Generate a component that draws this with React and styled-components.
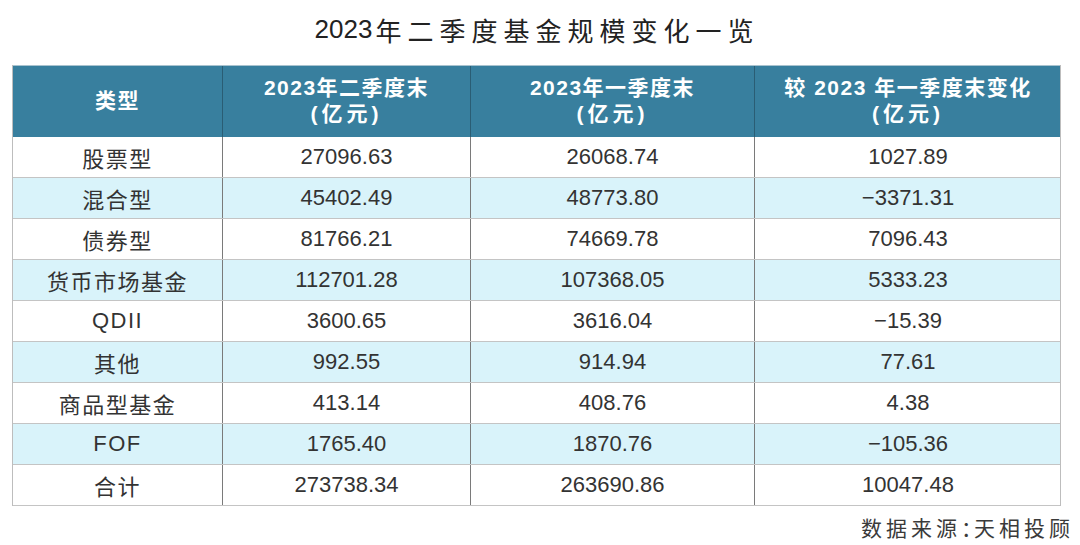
import React from 'react';
import styled, { createGlobalStyle } from 'styled-components';

const GlobalStyle = createGlobalStyle`
  html, body {
    margin: 0;
    padding: 0;
    background: #ffffff;
  }
  body {
    font-family: "Liberation Sans", "Noto Sans CJK SC", sans-serif;
  }
`;

const Page = styled.div`
  width: 1080px;
  height: 545px;
  box-sizing: border-box;
  padding: 0 12px 0 12px;
  display: flex;
  flex-direction: column;
  overflow: hidden;
`;

const Title = styled.h1`
  margin: 0;
  height: 65px;
  display: flex;
  align-items: center;
  justify-content: center;
  padding: 0 6px 6px 0;
  box-sizing: border-box;
  font-size: 26px;
  font-weight: 400;
  color: #222222;
  letter-spacing: 6px;

  span {
    letter-spacing: 0;
    margin-right: 3px;
  }
`;

const Table = styled.div`
  width: 1049px;
  display: flex;
  flex-direction: column;
  border-left: 1px solid #bdbdbd;
  border-right: 1px solid #bdbdbd;
  box-sizing: border-box;
`;

const cols = '209px 248px 284px 307px';

const HeadRow = styled.div`
  display: grid;
  grid-template-columns: ${cols};
  height: 72px;
  background: #387f9e;
  border-top: 1px solid #a9c3cf;
  box-sizing: border-box;
`;

const HeadCell = styled.div`
  display: flex;
  flex-direction: column;
  align-items: center;
  justify-content: center;
  color: #ffffff;
  font-size: 21px;
  font-weight: 700;
  line-height: 26px;
  letter-spacing: 1.5px;
  border-left: ${p => (p.$first ? 'none' : '1px solid #2a5d74')};
  padding-bottom: 2px;

  small {
    font-size: 21px;
    letter-spacing: 4px;
  }
`;

const Row = styled.div`
  display: grid;
  grid-template-columns: ${cols};
  height: 41px;
  background: ${p => (p.$alt ? '#d9f3fa' : '#ffffff')};
  border-bottom: 1px solid #c4c4c4;
  box-sizing: border-box;
`;

const Cell = styled.div`
  display: flex;
  align-items: center;
  justify-content: center;
  font-size: 22px;
  color: #333333;
  letter-spacing: ${p => (p.$label ? '1.5px' : '0')};
  border-left: ${p => (p.$label ? 'none' : '1px solid #7a7a7a')};
  padding-bottom: 1px;
`;

const Source = styled.div`
  align-self: flex-end;
  margin-top: 11px;
  margin-right: -6px;
  font-size: 21px;
  line-height: 24px;
  color: #3a3a3a;
  letter-spacing: 4px;
  white-space: nowrap;

  span {
    letter-spacing: -8px;
  }
`;

const rows = [
  ['股票型', '27096.63', '26068.74', '1027.89'],
  ['混合型', '45402.49', '48773.80', '\u22123371.31'],
  ['债券型', '81766.21', '74669.78', '7096.43'],
  ['货币市场基金', '112701.28', '107368.05', '5333.23'],
  ['QDII', '3600.65', '3616.04', '\u221215.39'],
  ['其他', '992.55', '914.94', '77.61'],
  ['商品型基金', '413.14', '408.76', '4.38'],
  ['FOF', '1765.40', '1870.76', '\u2212105.36'],
  ['合计', '273738.34', '263690.86', '10047.48'],
];

export default function App() {
  return (
    <>
      <GlobalStyle />
      <Page>
        <Title>
          <span>2023</span>年二季度基金规模变化一览
        </Title>
        <Table>
          <HeadRow>
            <HeadCell $first>类型</HeadCell>
            <HeadCell>
              2023年二季度末
              <small>(亿元)</small>
            </HeadCell>
            <HeadCell>
              2023年一季度末
              <small>(亿元)</small>
            </HeadCell>
            <HeadCell>
              较 2023 年一季度末变化
              <small>(亿元)</small>
            </HeadCell>
          </HeadRow>
          {rows.map((r, i) => (
            <Row key={r[0]} $alt={i % 2 === 1}>
              <Cell $label>{r[0]}</Cell>
              <Cell>{r[1]}</Cell>
              <Cell>{r[2]}</Cell>
              <Cell>{r[3]}</Cell>
            </Row>
          ))}
        </Table>
        <Source>
          数据来源<span>：</span>天相投顾
        </Source>
      </Page>
    </>
  );
}
